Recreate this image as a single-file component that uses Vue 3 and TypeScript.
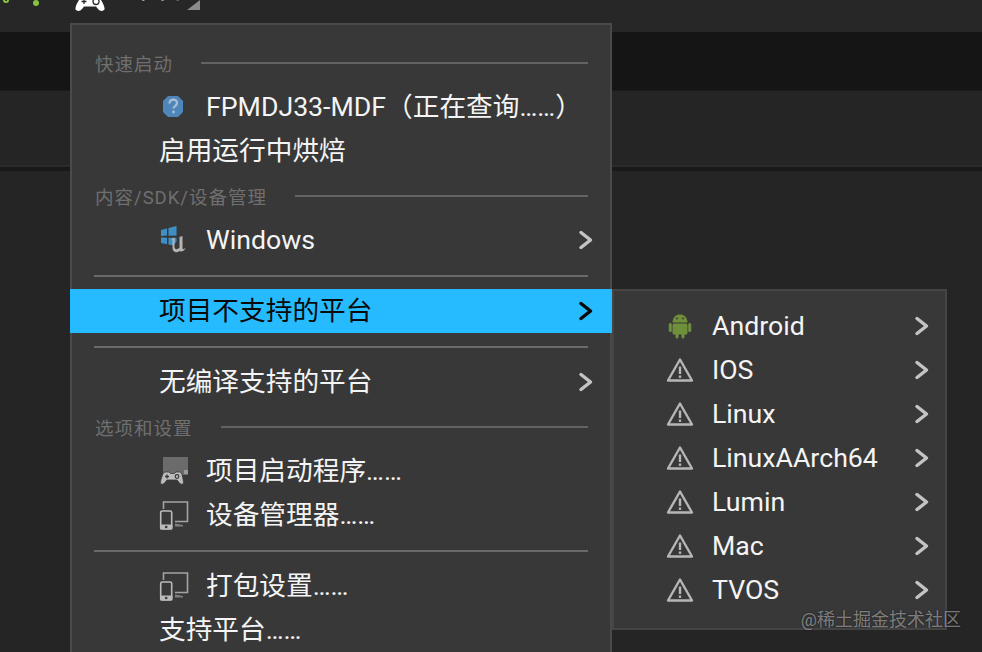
<script setup lang="ts">
interface Row {
  kind: 'head' | 'item' | 'sep';
  label?: string;
  icon?: string;
  arrow?: boolean;
  active?: boolean;
}

const mainRows: Row[] = [
  { kind: 'head', label: '快速启动' },
  { kind: 'item', label: 'FPMDJ33-MDF（正在查询……）', icon: 'question' },
  { kind: 'item', label: '启用运行中烘焙' },
  { kind: 'head', label: '内容/SDK/设备管理' },
  { kind: 'item', label: 'Windows', icon: 'windows', arrow: true },
  { kind: 'sep' },
  { kind: 'item', label: '项目不支持的平台', arrow: true, active: true },
  { kind: 'sep' },
  { kind: 'item', label: '无编译支持的平台', arrow: true },
  { kind: 'head', label: '选项和设置' },
  { kind: 'item', label: '项目启动程序……', icon: 'launcher' },
  { kind: 'item', label: '设备管理器……', icon: 'device' },
  { kind: 'sep' },
  { kind: 'item', label: '打包设置……', icon: 'device' },
  { kind: 'item', label: '支持平台……' },
];

const platforms = [
  { label: 'Android', icon: 'android' },
  { label: 'IOS', icon: 'warning' },
  { label: 'Linux', icon: 'warning' },
  { label: 'LinuxAArch64', icon: 'warning' },
  { label: 'Lumin', icon: 'warning' },
  { label: 'Mac', icon: 'warning' },
  { label: 'TVOS', icon: 'warning' },
];
</script>

<template>
  <div class="screen">
    <svg class="defs" aria-hidden="true">
      <defs>
        <symbol id="i-question" viewBox="0 0 30 30">
          <path d="M9 4h10l5 5v11l-5 5H9l-5-5V9z" fill="#4f86b9" />
          <path d="M10.500 11.500c.3-5 7.500-5 7.500-.5 0 3-3.500 3-3.500 5.500" fill="none" stroke="#a9bfd6" stroke-width="2.200" />
          <circle cx="14.500" cy="20" r="1.400" fill="#a9bfd6" />
        </symbol>
        <symbol id="i-windows" viewBox="0 0 30 30">
          <path d="M2 5l6-1.500v7L2 11zM9.500 3l8-2v9.500l-8 .3zM2 12.500l6 .2v6.500l-6-1.300zM9.500 12.800l8 .2v3.500l-3 4-5-1z" fill="#3f8fc4" />
          <path d="M12 14c2-.5 3-1 3.500-2v10c0 2.500 3 3 5 .5V12l3-1v12c0 1.500 1 1.500 3 0-1 3-4 4.500-6 3-3 2.500-7 1-7-3v-7c0-1-.5-2-1.500-2z" fill="#b4b4b4" />
        </symbol>
        <symbol id="i-launcher" viewBox="0 0 30 30">
          <rect x="4" y="1" width="25" height="18" fill="#6b6b6b" />
          <rect x="25" y="14" width="4" height="4" fill="#9a9a9a" />
          <path d="M6 16h4l1.500 1.500h4L17 16h4c2 0 3 7 3.500 10 .2 2.500-2.500 3-4 1l-2.500-3H8l-2.500 3c-1.500 2-4.500 1.500-4-1C2 23 4 16 6 16z" fill="#bcbcbc" stroke="#383838" stroke-width=".8" />
          <path d="M6 20.500h4M8 18.500v4" stroke="#383838" stroke-width="1.300" />
          <circle cx="18" cy="20.500" r="1.800" fill="none" stroke="#383838" stroke-width="1.200" />
        </symbol>
        <symbol id="i-device" viewBox="0 0 30 30">
          <path d="M4.500 9V2H28.500V21.500H16" fill="none" stroke="#a4a4a4" stroke-width="1.600" />
          <path d="M16 23.500l8 1.500v1.500h-8z" fill="#7e7e7e" />
          <rect x="1.700" y="11" width="11" height="18" rx="1.500" fill="none" stroke="#bababa" stroke-width="1.600" />
          <rect x="1" y="24.500" width="12.500" height="5" rx="1" fill="#bababa" />
          <circle cx="7.200" cy="27" r="1.300" fill="#383838" />
        </symbol>
        <symbol id="i-android" viewBox="0 0 28 26">
          <path d="M6.500 9.500C6.800 4 10 1.500 14 1.500s7.200 2.500 7.500 8z" fill="#6f8f3b" />
          <rect x="6.500" y="10.500" width="15" height="11" rx="1.500" fill="#6f8f3b" />
          <rect x="2.800" y="10" width="3" height="9" rx="1.500" fill="#6f8f3b" />
          <rect x="22.200" y="10" width="3" height="9" rx="1.500" fill="#6f8f3b" />
          <rect x="9.500" y="20" width="3" height="5.500" rx="1.500" fill="#6f8f3b" />
          <rect x="15.500" y="20" width="3" height="5.500" rx="1.500" fill="#6f8f3b" />
          <circle cx="11" cy="5.500" r=".9" fill="#383838" />
          <circle cx="17" cy="5.500" r=".9" fill="#383838" />
        </symbol>
        <symbol id="i-warning" viewBox="0 0 28 26">
          <path d="M14 2.500L26 23.500H2z" fill="none" stroke="#b6b6b6" stroke-width="2.400" stroke-linejoin="round" />
          <rect x="12.800" y="9.500" width="2.400" height="7.500" fill="#b6b6b6" />
          <rect x="12.800" y="18.500" width="2.400" height="2.400" fill="#b6b6b6" />
        </symbol>
      </defs>
    </svg>

    <div class="toolbar">
      <span class="status-arc"></span>
      <span class="status-dot"></span>
      <svg class="pad" viewBox="0 0 30 11">
        <path d="M4 0H26C28 3 30 7 29.500 9.500 28 11.500 25 11.500 23 9L21 6.500H9L7 9C5 11.500 2 11.500.5 9.500 0 7 2 3 4 0z" fill="#fff" />
        <circle cx="21" cy="1.500" r="3" fill="none" stroke="#2c2c2c" stroke-width="1.300" />
        <path d="M9 0v4M6.500 1.500h5" stroke="#2c2c2c" stroke-width="1.300" />
      </svg>
      <span class="platform-label">平台</span>
      <span class="corner"></span>
    </div>
    <div class="band-dark"></div>
    <div class="band-tabs"></div>
    <div class="band-rule"></div>
    <div class="band-body"></div>

    <div class="menu">
      <template v-for="(row, i) in mainRows" :key="i">
        <div v-if="row.kind === 'head'" class="head">
          <span>{{ row.label }}</span>
          <i class="head-line"></i>
        </div>
        <div v-else-if="row.kind === 'sep'" class="sep"></div>
        <div v-else class="row" :class="{ active: row.active }">
          <span v-if="row.icon" class="icon-slot">
            <svg class="icon"><use :href="'#i-' + row.icon" /></svg>
          </span>
          <span class="label">{{ row.label }}</span>
          <svg v-if="row.arrow" class="chevron" viewBox="0 0 16 20">
            <path d="M3 2.500L12.500 10 3 17.500" />
          </svg>
        </div>
      </template>
    </div>

    <div class="submenu">
      <div v-for="p in platforms" :key="p.label" class="sub-row">
        <svg class="sub-icon"><use :href="'#i-' + p.icon" /></svg>
        <span class="label">{{ p.label }}</span>
        <svg class="chevron" viewBox="0 0 16 20">
          <path d="M3 2.500L12.500 10 3 17.500" />
        </svg>
      </div>
    </div>

    <div class="watermark">@稀土掘金技术社区</div>
  </div>
</template>

<style>
html,
body {
  margin: 0;
  background: #262626;
}
</style>

<style scoped>
.screen {
  position: relative;
  width: 982px;
  height: 652px;
  overflow: hidden;
  display: flex;
  flex-direction: column;
  background: #252525;
  font-family: Roboto, "Noto Sans CJK SC", sans-serif;
  color: #f4f4f4;
}

.defs {
  position: absolute;
  width: 0;
  height: 0;
}

.toolbar {
  flex: none;
  height: 32px;
  background: #272727;
  display: flex;
  align-items: flex-start;
  overflow: hidden;
}

.status-arc {
  width: 6px;
  height: 6px;
  margin: -3px 0 0 3px;
  border-radius: 50%;
  border: 2px solid #8cc63f;
  border-top-color: transparent;
  box-sizing: border-box;
}

.status-dot {
  width: 6px;
  height: 6px;
  margin: 0 0 0 24px;
  border-radius: 50%;
  background: #86c440;
}

.pad {
  width: 30px;
  height: 11px;
  margin-left: 36px;
}

.platform-label {
  margin: -26px 0 0 25px;
  font-size: 26.700px;
  line-height: 30px;
  color: #fff;
}

.corner {
  width: 0;
  height: 0;
  margin-left: 4px;
  border-style: solid;
  border-width: 0 0 10px 13px;
  border-color: transparent transparent #8a8a8a transparent;
}

.band-dark {
  flex: none;
  height: 58px;
  background: #151515;
  border-bottom: 1px solid #1b1b1b;
}

.band-tabs {
  flex: none;
  height: 74px;
  background: #252525;
}

.band-rule {
  flex: none;
  height: 4px;
  background: #191919;
  border-top: 2px solid #2b2b2b;
}

.band-body {
  flex: 1;
  background: #252525;
}

.menu {
  position: absolute;
  left: 70px;
  top: 23px;
  width: 542px;
  box-sizing: border-box;
  padding-top: 15px;
  background: #383838;
  border: 2px solid #4a4a4a;
}

.head {
  height: 45px;
  display: flex;
  align-items: center;
  gap: 28px;
  padding: 0 22px 0 23px;
  font-size: 18.500px;
  letter-spacing: 1px;
  color: #6f6f6f;
}

.head-line {
  flex: 1;
  height: 2px;
  background: #636363;
}

.sep {
  height: 2px;
  margin: 13px 22px 12px;
  background: #6a6a6a;
}

.row {
  height: 44px;
  display: flex;
  align-items: center;
  padding: 0 16px 0 87px;
}

.row.active {
  margin: 0 -2px;
  padding: 0 18px 0 89px;
  background: #26bbff;
  color: #0a0a0a;
}

.icon-slot {
  width: 47px;
  height: 30px;
  flex: none;
}

.icon {
  width: 30px;
  height: 30px;
  display: block;
}

.label {
  font-size: 26.700px;
  line-height: 44px;
  white-space: nowrap;
}

.chevron {
  width: 16px;
  height: 20px;
  margin-left: auto;
  flex: none;
  fill: none;
  stroke: #c4c4c4;
  stroke-width: 3.500;
  stroke-linecap: round;
  stroke-linejoin: round;
}

.row.active .chevron {
  stroke: #0a0a0a;
}

.submenu {
  position: absolute;
  left: 612px;
  top: 289px;
  width: 335px;
  height: 341px;
  box-sizing: border-box;
  padding-top: 13px;
  background: #383838;
  border: 2px solid #454545;
}

.sub-row {
  height: 44px;
  display: flex;
  align-items: center;
  padding: 0 15px 0 52px;
}

.sub-icon {
  width: 28px;
  height: 26px;
  margin-right: 18px;
  flex: none;
}

.watermark {
  position: absolute;
  right: 21px;
  top: 608px;
  font-size: 18px;
  line-height: 24px;
  color: rgba(255, 255, 255, 0.42);
  text-shadow: 0 0 2px rgba(0, 0, 0, 0.6);
  white-space: nowrap;
}
</style>
